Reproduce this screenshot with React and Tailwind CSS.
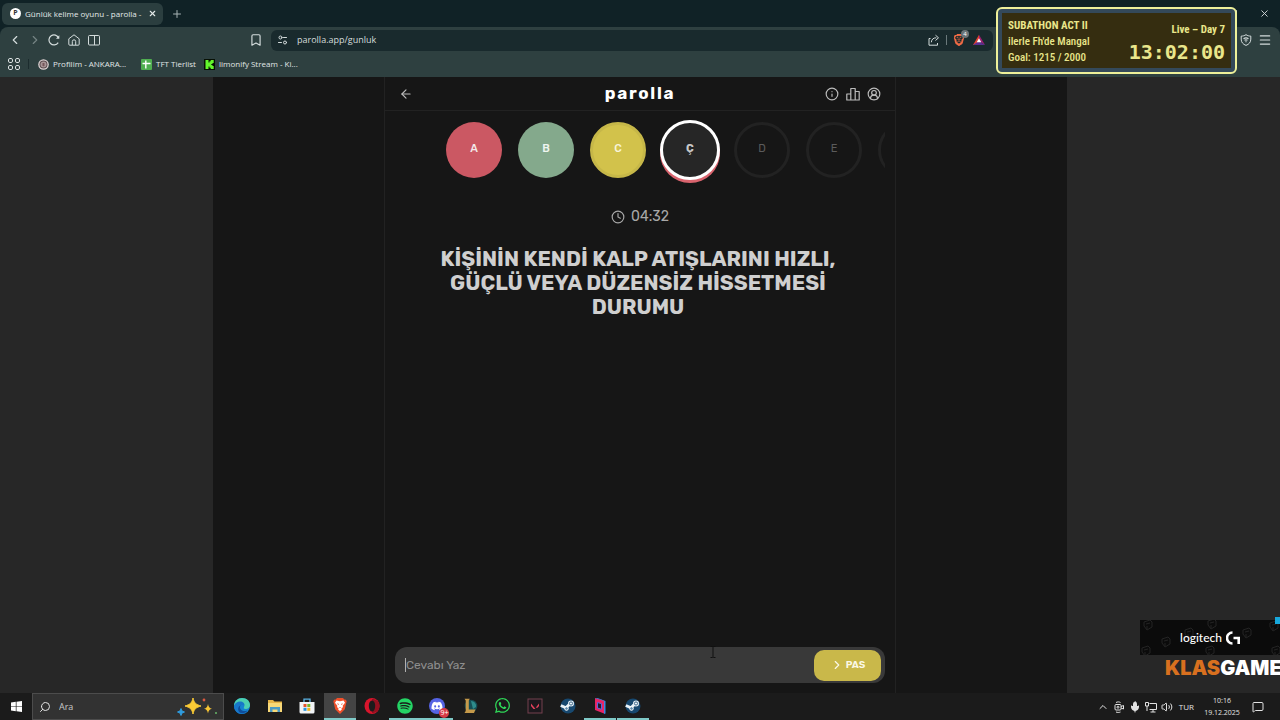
import {
  ArrowLeft, Bookmark, ChevronLeft, ChevronRight, ChevronUp, CircleUserRound,
  Clock, Info, Menu, MessageSquare, Mic, Plus, Search, Volume2, X,
} from 'lucide-react';
import { SiBrave } from 'react-icons/si';
import { FaDiscord, FaSpotify, FaWhatsapp } from 'react-icons/fa';

const letters = [
  { char: 'A', status: 'wrong' },
  { char: 'B', status: 'correct' },
  { char: 'C', status: 'passed' },
  { char: 'Ç', status: 'active' },
  { char: 'D', status: 'idle' },
  { char: 'E', status: 'idle' },
  { char: '', status: 'idle' },
];

const letterStyles = {
  wrong: 'size-14 bg-[#cb5863] text-[#f3e9ea] font-medium',
  correct: 'size-14 bg-[#84a98c] text-[#eff5f0] font-medium',
  passed: 'size-14 bg-[#d2c24b] border-3 border-[#c6b748] text-[#f8f4da] font-medium',
  active: 'size-[60px] -mx-0.5 bg-[#262626] border-3 border-white text-[#c9c9c9] font-bold shadow-[0_3px_0_#d9646e]',
  idle: 'size-14 border-3 border-[#222222] text-[#5b5b5b]',
};

function SiteSettingsIcon() {
  return (
    <svg className="size-3" viewBox="0 0 12 12" fill="none" stroke="currentColor" strokeLinecap="round">
      <circle cx="3.5" cy="3.5" r="1.5" />
      <path d="M6.5 3.5h3M1.5 8.5h3" />
      <circle cx="8" cy="8.5" r="1.5" />
    </svg>
  );
}

function AppsIcon() {
  return (
    <svg className="size-3" viewBox="0 0 12 12" fill="none" stroke="currentColor">
      <rect x="0.5" y="0.5" width="4" height="4" rx="1.4" />
      <rect x="7.5" y="0.5" width="4" height="4" rx="1.4" />
      <rect x="0.5" y="7.5" width="4" height="4" rx="1.4" />
      <rect x="7.5" y="7.5" width="4" height="4" rx="1.4" />
    </svg>
  );
}

function HomeIcon() {
  return (
    <svg className="size-3" viewBox="0 0 12 12" fill="none" stroke="currentColor" strokeLinejoin="round">
      <path d="M.8 4.8 6 .8l5.2 4v5.4a1 1 0 0 1-1 1H1.8a1 1 0 0 1-1-1z" />
      <path d="M4.3 11V7.5a1.7 1.7 0 0 1 3.4 0V11" />
    </svg>
  );
}

function ReloadIcon() {
  return (
    <svg className="size-3" viewBox="0 0 12 12" fill="none" stroke="currentColor" strokeWidth="1.2">
      <path d="M10.2 8.6A5 5 0 1 1 10.6 4" />
      <path d="M11.3 1.3v3.4H8z" fill="currentColor" stroke="none" />
    </svg>
  );
}

function SplitViewIcon() {
  return (
    <svg className="size-3" viewBox="0 0 12 12" fill="none" stroke="currentColor">
      <rect x="0.5" y="1.5" width="11" height="9.5" rx="1" />
      <path d="M6.5 1.5V11" />
    </svg>
  );
}

function ShareIcon() {
  return (
    <svg className="size-3" viewBox="0 0 12 12" fill="none" stroke="currentColor" strokeLinejoin="round">
      <path d="M2.5 4.5H1v6.7h8.5V9" />
      <path d="M3.3 8.3c.3-3 2-4.5 5-4.5M7.5 1.2l3 2.6-3 2.7" />
    </svg>
  );
}

function SheetsIcon() {
  return (
    <svg className="size-[11px]" viewBox="0 0 11 11">
      <rect width="11" height="11" rx="1" fill="#4fae50" />
      <path d="M1.5 4.5h8M4.8 1.5v8" stroke="#fff" strokeWidth="1.4" />
    </svg>
  );
}

function KickIcon() {
  return (
    <svg className="size-[11px]" viewBox="0 0 11 11">
      <rect width="11" height="11" fill="#071004" />
      <path d="M1.5 1h3v2.5h1V2.3h1.2V1h3v3H8.5v1H7.3v1h1.2v1h1.2v3h-3V8.7H5.5V7.5h-1V10h-3z" fill="#63f62c" />
    </svg>
  );
}

function SealIcon() {
  return (
    <svg className="size-[11px]" viewBox="0 0 11 11">
      <circle cx="5.5" cy="5.5" r="5.3" fill="#ddd3d3" />
      <circle cx="5.5" cy="5.5" r="4" fill="#5d4d50" />
      <circle cx="5.5" cy="5.5" r="3" fill="#a89596" />
      <path d="M4.5 4h2v2.5l-1 1-1-1z" fill="#75565a" />
    </svg>
  );
}

function BatIcon() {
  return (
    <svg className="size-3" viewBox="0 0 12 12">
      <path d="M6 .8 0 11h6z" fill="#e2402e" />
      <path d="M6 .8 12 11 6 7z" fill="#9b1f72" />
      <path d="M0 11h12L6 7z" fill="#59308f" />
      <path d="M6 4.3 3.7 8.2h4.6z" fill="#fff" />
    </svg>
  );
}

function VpnShieldIcon() {
  return (
    <svg className="size-3" viewBox="0 0 12 12" fill="none" stroke="currentColor">
      <path d="M6 .7c1.5 1 3 1.4 4.8 1.4v3C10.8 8.3 9 10.3 6 11.4 3 10.3 1.2 8.3 1.2 5.1v-3C3 2.1 4.5 1.7 6 .7z" />
      <path d="M3.5 4.7c1.7-1 3.3-1 5 0M4.5 6.2c1-.5 2-.5 3 0M6 7.3v1" strokeWidth="1.2" />
    </svg>
  );
}

function TabStrip() {
  return (
    <div className="h-[27px] flex items-center bg-[#102226] pl-0.5">
      <div className="w-[161px] h-[22px] flex items-center gap-1 pl-2 pr-1.5 rounded-md bg-[#2b3e3f] text-[#e4eaea]">
        <span className="size-[11px] rounded-full bg-white text-[7px] font-bold text-[#333] flex items-center justify-center shrink-0">P</span>
        <span className="flex-1 text-[8px] whitespace-nowrap">Günlük kelime oyunu - parolla -</span>
        <button aria-label="Sekmeyi kapat"><X className="size-[9px]" strokeWidth={3} /></button>
      </div>
      <button aria-label="Yeni sekme" className="ml-2 text-[#a7b3b4]"><Plus className="size-3" /></button>
      <button aria-label="Pencereyi küçült" className="ml-auto text-[#d7dcdc]">
        <svg className="size-2" viewBox="0 0 8 8" fill="none" stroke="currentColor"><path d="M.5 2.5h5v5h-5zM2.5 2.5v-2h5v5h-2" /></svg>
      </button>
      <button aria-label="Kapat" className="ml-[22px] mr-[10px] text-[#d7dcdc]"><X className="size-[11px]" /></button>
    </div>
  );
}

function AddressBar() {
  return (
    <div className="h-[26px] flex items-center bg-[#2e4040] text-[#d4dcdc] rounded-t-lg px-2">
      <div className="flex items-center gap-2">
        <button aria-label="Geri"><ChevronLeft className="size-3.5" /></button>
        <button aria-label="İleri" className="-mx-0.5 text-[#758383]"><ChevronRight className="size-3.5" /></button>
        <button aria-label="Yenile"><ReloadIcon /></button>
        <button aria-label="Ana sayfa"><HomeIcon /></button>
        <button aria-label="Bölünmüş görünüm"><SplitViewIcon /></button>
      </div>
      <button aria-label="Yer imi" className="ml-[149px]"><Bookmark className="size-3.5" /></button>
      <div className="ml-2 flex-1 h-[21px] flex items-center rounded-md bg-[#192a2d] pl-1.5 pr-2">
        <SiteSettingsIcon />
        <input aria-label="Adres" defaultValue="parolla.app/gunluk" className="ml-2 flex-1 bg-transparent text-[9px] outline-none" />
        <button aria-label="Paylaş"><ShareIcon /></button>
        <span className="mx-1.5 h-2.5 w-px bg-[#6b797b]" />
        <button aria-label="Brave kalkanları" className="relative mr-2">
          <SiBrave className="size-3 text-[#ee6a45]" />
          <span className="absolute -top-1 left-2 size-2 rounded-full bg-[#6a7478] text-[6px] leading-2 text-white text-center">4</span>
        </button>
        <button aria-label="Ödüller"><BatIcon /></button>
      </div>
      <button aria-label="VPN" className="ml-[247px]"><VpnShieldIcon /></button>
      <button aria-label="Menü" className="ml-1.5"><Menu className="size-3.5" /></button>
    </div>
  );
}

function BookmarksBar() {
  return (
    <nav className="h-6 flex items-center bg-[#2e4040] text-[#e0e6e6] text-[8px] pl-2 pb-0.5">
      <AppsIcon />
      <span className="ml-2 w-px h-2.5 bg-[#1c2c2e]" />
      <a href="#profil" className="ml-[9px] w-[103px] flex items-center gap-1"><SealIcon />Profilim - ANKARA...</a>
      <a href="#tft" className="w-[63px] flex items-center gap-1 whitespace-nowrap"><SheetsIcon />TFT Tierlist</a>
      <a href="#kick" className="flex items-center gap-1"><KickIcon />limonify Stream - Ki...</a>
    </nav>
  );
}

function Game() {
  return (
    <main className="flex-1 min-h-0 flex justify-center bg-[#272727]">
      <div className="w-2/3 flex justify-center bg-[#161616]">
        <section className="w-[512px] flex flex-col border-x border-[#222222] font-['Rubik','Inter',sans-serif]">
          <header className="h-[34px] shrink-0 grid grid-cols-3 items-center px-3.5 border-b border-[#222222] text-[#bcbcbc]">
            <button aria-label="Geri dön"><ArrowLeft className="size-3.5" /></button>
            <h1 className="pb-0.5 text-center text-[17px] leading-6 font-bold tracking-widest text-white">parolla</h1>
            <div className="flex justify-end gap-[7px]">
              <button aria-label="Bilgi"><Info className="size-3.5" /></button>
              <button aria-label="İstatistik">
                <svg className="size-3.5" viewBox="0 0 14 14" fill="none" stroke="currentColor" strokeWidth="1.2" strokeLinejoin="round">
                  <path d="M.8 7h4v6h-4zM4.8 1.5h4.4V13H4.8zM9.2 4.5h4V13h-4z" />
                </svg>
              </button>
              <button aria-label="Hesap"><CircleUserRound className="size-3.5" /></button>
            </div>
          </header>

          <div className="h-[77px] shrink-0 mx-2.5 pl-[51px] flex items-center gap-4 overflow-hidden">
            {letters.map((l, i) => (
              <span key={i} className={`shrink-0 rounded-full flex items-center justify-center text-[11px] ${letterStyles[l.status]}`}>
                {l.char}
              </span>
            ))}
          </div>

          <div className="mt-[19px] flex items-center justify-center gap-1.5 text-sm text-[#a8a8a8]">
            <Clock className="size-3.5" />
            <time className="leading-5">04:32</time>
          </div>

          <h2 className="mt-5 pl-8 pr-9 text-center text-[21px] leading-6 font-bold text-[#cfcfcf]">
            KİŞİNİN KENDİ KALP ATIŞLARINI HIZLI, GÜÇLÜ VEYA DÜZENSİZ HİSSETMESİ DURUMU
          </h2>

          <form className="mt-auto mx-2.5 mb-2.5 h-9 flex items-center rounded-xl bg-[#393939] pl-2.5 pr-1" onSubmit={e => e.preventDefault()}>
            <span className="w-px h-3.5 bg-[#b0b0b0]" />
            <input aria-label="Cevap" placeholder="Cevabı Yaz" className="flex-1 bg-transparent text-xs placeholder:text-[#8e8e8e] outline-none" />
            <button className="w-[67px] h-[31px] flex items-center justify-center gap-0.5 rounded-[10px] bg-[#c9b84a] text-[10px] font-semibold text-[#fbf8e6]">
              <ChevronRight className="size-3.5" />PAS
            </button>
          </form>
        </section>
      </div>
    </main>
  );
}

function SubathonBox() {
  return (
    <aside className="absolute top-[7px] right-[43px] w-[241px] h-[67px] rounded-md border-2 border-[#eef09a] bg-[#34495a] p-1 text-[#e9e68b] font-['Roboto_Condensed','Roboto',sans-serif]">
      <div className="h-full flex justify-between bg-[#352d10] px-1.5">
        <div className="text-[11px] leading-4 pt-[5px] whitespace-nowrap">
          <p className="font-bold">SUBATHON ACT II</p>
          <p className="font-medium">ilerle Fh'de Mangal</p>
          <p className="font-medium">Goal: 1215 / 2000</p>
        </div>
        <div className="pt-[9px] text-right">
          <p className="text-[11px] leading-4 font-bold">Live – Day 7</p>
          <p className="text-xl leading-7 font-bold font-['DejaVu_Sans_Mono',monospace]">13:02:00</p>
        </div>
      </div>
    </aside>
  );
}

function GlyphPattern() {
  const spots = [[4, 1], [68, 0], [45, 9], [103, 9], [22, 18], [66, 27], [2, 27], [132, 27], [130, 2]];
  return (
    <svg className="absolute inset-0 size-full" viewBox="0 0 140 35" fill="none" stroke="#242424">
      {spots.map(([x, y]) => (
        <path key={`${x}-${y}`} d={`M${x} ${y + 1}l6-2 2 2v5l-5 3-3-4zM${x + 2} ${y + 3}l4-1M${x + 3} ${y + 5}v3`} />
      ))}
    </svg>
  );
}

function SponsorOverlay() {
  return (
    <div className="absolute right-0 bottom-10 w-[140px]">
      <div className="relative h-[35px] flex items-center justify-center gap-1 bg-[#0b0b0b] text-white overflow-hidden">
        <GlyphPattern />
        <span className="relative text-xs font-medium font-['Lato',sans-serif]">logitech</span>
        <svg className="relative size-3.5" viewBox="0 0 14 14" fill="none" stroke="currentColor" strokeWidth="2.6">
          <path d="M6.5 1.5a5.500 5.500 0 0 0 0 11M7.500 7h5.200v6" />
        </svg>
      </div>
      <p className="ml-[25px] mt-px text-xl leading-6 font-black text-white whitespace-nowrap font-['Inter',sans-serif]">
        <span className="text-[#d8701f]">KLAS</span>GAME
      </p>
      <span className="absolute -top-[3px] right-0 w-[5px] h-[7px] bg-[#17a8dc]" />
    </div>
  );
}

function EdgeIcon() {
  return (
    <svg className="size-4" viewBox="0 0 16 16">
      <circle cx="8" cy="8" r="8" fill="#1683d0" />
      <path d="M0 8C0 3 4 0 8 0c5 0 8 3.3 8 7 0 2.5-2 4-4.2 4-2 0-2.5-.8-1.8-1.7C11 7.5 9.5 5 6.5 5 3.5 5 .8 6.5 0 8z" fill="#4cd0b1" />
      <path d="M0 8c.8-3 3.5-4.5 6-4.5 3 0 5 2 4.5 4.3C9 6 6.5 6.5 6 8.5c-.8 3.5 3 5.5 7 4.3C11.5 15 9.5 16 8 16 3.5 16 0 12.5 0 8z" fill="#1877c9" />
      <path d="M6 8.5C5.5 12 9 14 13.5 12.5 11 16 6 16 4.5 13 3.5 10.5 4.5 8 7 7.3 6.5 7.6 6 8 6 8.5z" fill="#0f4e9c" />
    </svg>
  );
}

function FolderIcon() {
  return (
    <svg className="size-4" viewBox="0 0 16 16">
      <path d="M1 2h5l1.5 1.5H15V14H1z" fill="#e7b548" />
      <path d="M1 5h14v9H1z" fill="#f8d978" />
      <path d="M3 14V9h10v5h-2.5v-2.5h-5V14z" fill="#4b9ac4" />
    </svg>
  );
}

function StoreIcon() {
  return (
    <svg className="size-4" viewBox="0 0 16 16">
      <path d="M5 4V1.2h6V4" fill="none" stroke="#5ab4e5" strokeWidth="1.3" />
      <path d="M.5 4h15v10a1.5 1.5 0 0 1-1.5 1.5H2A1.5 1.5 0 0 1 .5 14z" fill="#f1f4f6" />
      <path d="M4.5 6h3v3h-3z" fill="#e4532c" />
      <path d="M8.3 6h3v3h-3z" fill="#76b82a" />
      <path d="M4.5 9.8h3v3h-3z" fill="#2794dd" />
      <path d="M8.3 9.8h3v3h-3z" fill="#f3b51b" />
    </svg>
  );
}

function BraveIcon() {
  return (
    <svg className="size-4" viewBox="0 0 16 16">
      <path d="M5 0h6l1.3 1.5 1.7.2.7 2-.5 1.3-1.4 6.3L8 16l-4.8-4.7L1.8 5l-.5-1.3.7-2 1.7-.2z" fill="#f0502b" />
      <path d="m8 3.3 3.5-.8L13 4.8l-2.3 3 .3 1.5-1.5.7.3 1.5L8 13l-1.8-1.5.3-1.5L5 9.3l.3-1.5L3 4.8l1.5-2.3z" fill="#fff" />
      <path d="m5 5.2 2 .7-.8 1.2zM11 5.2l-2 .7.8 1.2zM7 9h2l-1 1z" fill="#f0502b" />
    </svg>
  );
}

function OperaIcon() {
  return (
    <svg className="size-4" viewBox="0 0 16 16">
      <ellipse cx="8" cy="8" rx="7.5" ry="8" fill="#d8152c" />
      <path d="M8 1c4 0 7.5 2 7.5 7S12 15 8 15z" fill="#93101f" />
      <ellipse cx="8" cy="8" rx="3.2" ry="5.6" fill="#1b1b1b" />
    </svg>
  );
}

function LeagueIcon() {
  return (
    <svg className="size-4" viewBox="0 0 16 16">
      <circle cx="9" cy="8" r="6.3" fill="#164e55" />
      <path d="M9 3a5 5 0 0 1 5 6l-3 2z" fill="#2e8c8c" />
      <path d="M2.5.8h5.3l-1 1.7v9h6.7L12 15H2.5l1.2-2V2.5z" fill="#c69a4a" />
    </svg>
  );
}

function ValorantIcon() {
  return (
    <svg className="size-4" viewBox="0 0 16 16">
      <rect x="1" y="1" width="14" height="14" fill="#1d181d" stroke="#74404f" />
      <path d="m4 5.5 4.5 5.5h-2L4 8zM12 5.5V8l-1.5 1.8H8.7z" fill="#e4415c" />
    </svg>
  );
}

function CubeIcon() {
  return (
    <svg className="size-4" viewBox="0 0 16 16">
      <path d="m3 0 9 2.5v13L3 12z" fill="#e82566" />
      <path d="m3 0 2-.2L13.5 3v12.5L12 16V3z" fill="#3a86df" />
      <path d="m5.5 4.5 4 1.2v5.6L5.5 10z" fill="#25182a" stroke="#5b68df" />
    </svg>
  );
}

function SteamIcon() {
  return (
    <svg className="size-4" viewBox="0 0 16 16">
      <circle cx="8" cy="8" r="7.5" fill="#17486f" />
      <path d="M.8 7.500 6 9.800l4-4" fill="none" stroke="#e9f2f8" strokeWidth="3" />
      <circle cx="11" cy="5.5" r="3" fill="#e9f2f8" />
      <circle cx="11" cy="5.5" r="1.6" fill="none" stroke="#17486f" strokeWidth=".8" />
      <circle cx="6.5" cy="10.5" r="1.8" fill="#5c89ab" stroke="#fff" />
    </svg>
  );
}

function DiscordIcon() {
  return (
    <span className="relative size-4 rounded-full bg-[#5563e4] flex items-center justify-center">
      <FaDiscord className="size-3 text-white" />
      <span className="absolute -right-1 -bottom-1 size-2.5 rounded-full bg-[#d63c47] text-[7px] leading-2.5 text-white text-center">9+</span>
    </span>
  );
}

const apps = [
  { name: 'Edge', icon: <EdgeIcon /> },
  { name: 'Dosya Gezgini', icon: <FolderIcon /> },
  { name: 'Microsoft Store', icon: <StoreIcon /> },
  { name: 'Brave', icon: <BraveIcon />, open: true, active: true },
  { name: 'Opera', icon: <OperaIcon /> },
  { name: 'Spotify', icon: <FaSpotify className="size-4 text-[#24d465]" />, open: true },
  { name: 'Discord', icon: <DiscordIcon />, open: true },
  { name: 'League of Legends', icon: <LeagueIcon /> },
  { name: 'WhatsApp', icon: <FaWhatsapp className="size-[17px] text-[#2fd858]" /> },
  { name: 'Valorant', icon: <ValorantIcon /> },
  { name: 'Steam', icon: <SteamIcon /> },
  { name: 'Oyun', icon: <CubeIcon />, open: true },
  { name: 'Steam 2', icon: <SteamIcon />, open: true },
];

function Sparkles() {
  return (
    <svg className="w-10 h-5" viewBox="0 0 40 20">
      <path d="M16 1c1 5 3 6.5 8 8-5 1.5-7 3-8 8-1-5-3-6.5-8-8 5-1.5 7-3 8-8z" fill="#fbcb35" stroke="#fbcb35" />
      <path d="M31 7c.6 3 1.5 4 4 4.8-2.5.7-3.4 1.7-4 4.7-.6-3-1.5-4-4-4.7 2.5-.8 3.4-1.8 4-4.8z" fill="#f8c634" />
      <path d="M4 11.5 5 14l2.5 1L5 16l-1 2.5L3 16l-2.5-1L3 14z" fill="#2f9de0" stroke="#2f9de0" />
      <circle cx="27" cy="3" r="1.4" fill="#d9583f" />
      <circle cx="39" cy="16" r="1" fill="#69b96b" />
    </svg>
  );
}

function Taskbar() {
  return (
    <footer className="h-[27px] shrink-0 flex items-center bg-[#1b1b1b] text-[#e3e3e3]">
      <button aria-label="Başlat" className="w-8 flex justify-center">
        <svg className="size-[11px]" viewBox="0 0 11 11" fill="#fff">
          <path d="M0 1.5 4.8.8v4.4H0zM5.5.7 11 0v5.2H5.5zM0 5.8h4.8v4.4L0 9.5zM5.5 5.8H11V11l-5.5-.7z" />
        </svg>
      </button>
      <label className="w-48 h-full flex items-center border border-[#4c4c4c] bg-[#323232] px-1.5">
        <Search className="size-3 -scale-x-100" />
        <input aria-label="Ara" placeholder="Ara" className="ml-2 w-0 flex-1 bg-transparent text-[9px] placeholder:text-[#c9c9c9] outline-none" />
        <Sparkles />
      </label>
      <div className="h-full w-[423px] ml-0.5 flex justify-between">
        {apps.map(app => (
          <button
            key={app.name}
            aria-label={app.name}
            className={`w-8 flex items-center justify-center border-b-2 ${app.open ? 'border-[#7fc9c7]' : 'border-transparent'} ${app.active ? 'bg-[#444444]' : ''}`}
          >
            {app.icon}
          </button>
        ))}
      </div>
      <div className="ml-auto flex items-center gap-1">
        <ChevronUp className="size-3" />
        <svg className="size-3" viewBox="0 0 12 12" fill="none" stroke="currentColor">
          <rect x="2" y="3.5" width="6" height="5.5" rx="1" />
          <path d="m8 5.5 2.5-1V8L8 7M3 1.5c1.5-.8 3-.8 4.5 0M3 11c1.5.6 3 .6 4.5 0" />
          <circle cx="5" cy="6.2" r="1" />
        </svg>
        <Mic className="size-3" fill="currentColor" />
        <svg className="size-3" viewBox="0 0 12 12" fill="none" stroke="currentColor">
          <path d="M4.5 2.5h7v6h-7M8 8.5V11M5.5 11h5M.5 1.5h3V5h-3zM2 5v5" />
        </svg>
        <Volume2 className="size-3" />
        <span className="ml-0.5 text-[8px]">TUR</span>
        <div className="ml-1 w-10 text-[7px] leading-3 text-center whitespace-nowrap">
          <p>10:16</p>
          <p>19.12.2025</p>
        </div>
        <MessageSquare className="ml-1.5 mr-4 size-3" />
      </div>
    </footer>
  );
}

export default function App() {
  return (
    <div className="relative h-screen flex flex-col overflow-hidden bg-[#102226] font-['Open_Sans',sans-serif]">
      <TabStrip />
      <AddressBar />
      <BookmarksBar />
      <Game />
      <Taskbar />
      <SubathonBox />
      <SponsorOverlay />
      <svg className="absolute left-[710px] top-[646px] w-1.5 h-3" viewBox="0 0 6 12" fill="none" stroke="#101010">
        <path d="M.5.5h2l.5.5.5-.5h2M3 1v10M.5 11.5h2L3 11l.5.5h2" />
      </svg>
    </div>
  );
}
